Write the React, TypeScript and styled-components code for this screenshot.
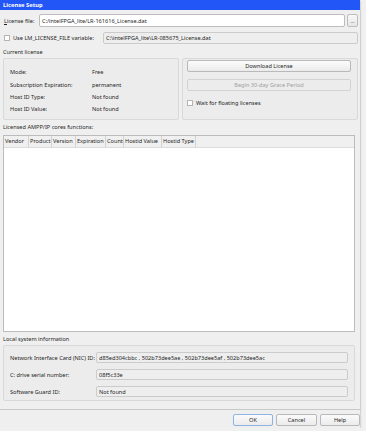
import React from "react";
import styled, { createGlobalStyle } from "styled-components";

const GlobalStyle = createGlobalStyle`
  html, body {
    margin: 0;
    padding: 0;
    background: #f0f0f0;
  }
  body {
    font-family: "Noto Sans", "DejaVu Sans", sans-serif;
    font-size: 5.6px;
    color: #1f1f1f;
  }
`;

const Window = styled.div`
  width: 360px;
  height: 428px;
  background: #efefef;
  box-shadow: 0 1px 2px rgba(0, 0, 0, 0.35);
  display: flex;
  flex-direction: column;
`;

const TitleBar = styled.div`
  height: 10px;
  background: #2356f6;
  color: #fff;
  font-weight: bold;
  font-size: 5.8px;
  line-height: 10px;
  padding-left: 3px;
`;

const Frame = styled.div`
  width: 355px;
  height: 395px;
  border-right: 1px solid #cfcfcf;
  border-bottom: 1px solid #c8c8c8;
  padding: 4px 2px 0 3px;
  display: flex;
  flex-direction: column;
`;

const Row = styled.div<{ $h: number; $mt?: number }>`
  display: flex;
  align-items: center;
  height: ${(p) => p.$h}px;
  margin-top: ${(p) => p.$mt ?? 0}px;
`;

const Label = styled.span<{ $w?: number }>`
  white-space: nowrap;
  width: ${(p) => (p.$w ? `${p.$w}px` : "auto")};
  flex-shrink: 0;
`;

const TextBox = styled.div<{ $readonly?: boolean }>`
  flex: 1;
  height: 100%;
  box-sizing: border-box;
  border: 1px solid ${(p) => (p.$readonly ? "#cbcbcb" : "#bdbdbd")};
  border-radius: 2px;
  background: ${(p) => (p.$readonly ? "#eeeeee" : "#ffffff")};
  display: flex;
  align-items: center;
  padding-left: 2px;
  white-space: nowrap;
  overflow: hidden;
`;

const SmallButton = styled.div`
  width: 11px;
  height: 100%;
  box-sizing: border-box;
  margin-left: 2px;
  border: 1px solid #bdbdbd;
  border-radius: 2px;
  background: linear-gradient(#f8f8f8, #e6e6e6);
  display: flex;
  align-items: center;
  justify-content: center;
  font-size: 5px;
  color: #555;
`;

const CheckBox = styled.span`
  width: 6px;
  height: 6px;
  box-sizing: border-box;
  border: 1px solid #b5b5b5;
  background: #fff;
  margin: 0 3px 0 1px;
  flex-shrink: 0;
`;

const SectionTitle = styled.div<{ $mt: number }>`
  margin-top: ${(p) => p.$mt}px;
  height: 7px;
  line-height: 7px;
  white-space: nowrap;
`;

const Columns = styled.div`
  display: flex;
  gap: 3px;
  margin-top: 2px;
  height: 62px;
`;

const GroupBox = styled.div<{ $w?: number }>`
  box-sizing: border-box;
  border: 1px solid #d9d9d9;
  border-radius: 2px;
  background: #ececec;
  ${(p) => (p.$w ? `width: ${p.$w}px;` : "flex: 1;")}
  display: flex;
  flex-direction: column;
`;

const InfoList = styled.div`
  display: grid;
  grid-template-columns: 82px 1fr;
  grid-auto-rows: 12.4px;
  align-items: center;
  padding: 7px 0 0 6px;
`;

const Actions = styled.div`
  display: flex;
  flex-direction: column;
  padding: 1px 6px 0 4px;
`;

const Button = styled.div<{ $disabled?: boolean; $default?: boolean; $w?: number }>`
  box-sizing: border-box;
  height: 12px;
  ${(p) => (p.$w ? `width: ${p.$w}px;` : "")}
  border: 1px solid ${(p) => (p.$default ? "#8fb3e4" : p.$disabled ? "#d2d2d2" : "#b9b9b9")};
  border-radius: 2px;
  background: ${(p) =>
    p.$disabled ? "#ececec" : "linear-gradient(#fbfbfb, #ebebeb)"};
  color: ${(p) => (p.$disabled ? "#a0a0a0" : "#1f1f1f")};
  display: flex;
  align-items: center;
  justify-content: center;
  white-space: nowrap;
`;

const Table = styled.div`
  margin-top: 4px;
  height: 197px;
  width: 352px;
  box-sizing: border-box;
  border: 1px solid #bcbcbc;
  background: #fff;
`;

const HeaderRow = styled.div`
  display: flex;
  height: 11px;
  background: #f0f0f0;
  border-bottom: 1px solid #dcdcdc;
`;

const HeaderCell = styled.div<{ $w: number }>`
  width: ${(p) => p.$w}px;
  box-sizing: border-box;
  border-right: 1px solid #d2d2d2;
  padding-left: 1px;
  line-height: 11px;
  white-space: nowrap;
  overflow: hidden;
`;

const LocalBox = styled(GroupBox)`
  margin-top: 2px;
  height: 56px;
  width: 352px;
  flex: none;
  padding: 6px 6px 0 6px;
  gap: 6px;
`;

const Footer = styled.div`
  display: flex;
  justify-content: flex-end;
  gap: 3px;
  padding: 4px 0 0 0;
`;

const headers: [string, number][] = [
  ["Vendor", 25],
  ["Product", 23],
  ["Version", 24],
  ["Expiration", 30],
  ["Count", 18],
  ["Hostid Value", 38],
  ["Hostid Type", 34],
];

const licenseInfo: [string, string][] = [
  ["Mode:", "Free"],
  ["Subscription Expiration:", "permanent"],
  ["Host ID Type:", "Not found"],
  ["Host ID Value:", "Not found"],
];

const localInfo: [string, string][] = [
  ["Network Interface Card (NIC) ID:", "d85ed304cbbc , 502b73dee5ae , 502b73dee5af , 502b73dee5ac"],
  ["C: drive serial number:", "08f5c33e"],
  ["Software Guard ID:", "Not found"],
];

export default function App() {
  return (
    <>
      <GlobalStyle />
      <Window>
        <TitleBar>License Setup</TitleBar>
        <Frame>
          <Row $h={13}>
            <Label $w={35} style={{ paddingLeft: 1 }}>
              <u>L</u>icense file:
            </Label>
            <TextBox>C:/intelFPGA_lite/LR-161616_License.dat</TextBox>
            <SmallButton>...</SmallButton>
          </Row>
          <Row $h={12} $mt={5}>
            <CheckBox />
            <Label $w={90}>Use LM_LICENSE_FILE variable:</Label>
            <TextBox $readonly>C:\intelFPGA_lite\LR-085675_License.dat</TextBox>
          </Row>
          <SectionTitle $mt={5}>Current license</SectionTitle>
          <Columns>
            <GroupBox $w={176}>
              <InfoList>
                {licenseInfo.map(([k, v]) => (
                  <React.Fragment key={k}>
                    <Label>{k}</Label>
                    <span>{v}</span>
                  </React.Fragment>
                ))}
              </InfoList>
            </GroupBox>
            <GroupBox>
              <Actions>
                <Button>Download License</Button>
                <Button $disabled style={{ marginTop: 7 }}>
                  Begin 30-day Grace Period
                </Button>
                <Row $h={8} $mt={8}>
                  <CheckBox style={{ marginLeft: 0 }} />
                  <Label>Wait for floating licenses</Label>
                </Row>
              </Actions>
            </GroupBox>
          </Columns>
          <SectionTitle $mt={4}>Licensed AMPP/IP cores functions:</SectionTitle>
          <Table>
            <HeaderRow>
              {headers.map(([h, w]) => (
                <HeaderCell key={h} $w={w}>
                  {h}
                </HeaderCell>
              ))}
            </HeaderRow>
          </Table>
          <SectionTitle $mt={4}>Local system information</SectionTitle>
          <LocalBox>
            {localInfo.map(([k, v]) => (
              <Row key={k} $h={11}>
                <Label $w={86}>{k}</Label>
                <TextBox $readonly>{v}</TextBox>
              </Row>
            ))}
          </LocalBox>
        </Frame>
        <Footer>
          <Button $default $w={40}>OK</Button>
          <Button $w={41}>Cancel</Button>
          <Button $w={40}>Help</Button>
        </Footer>
      </Window>
    </>
  );
}
